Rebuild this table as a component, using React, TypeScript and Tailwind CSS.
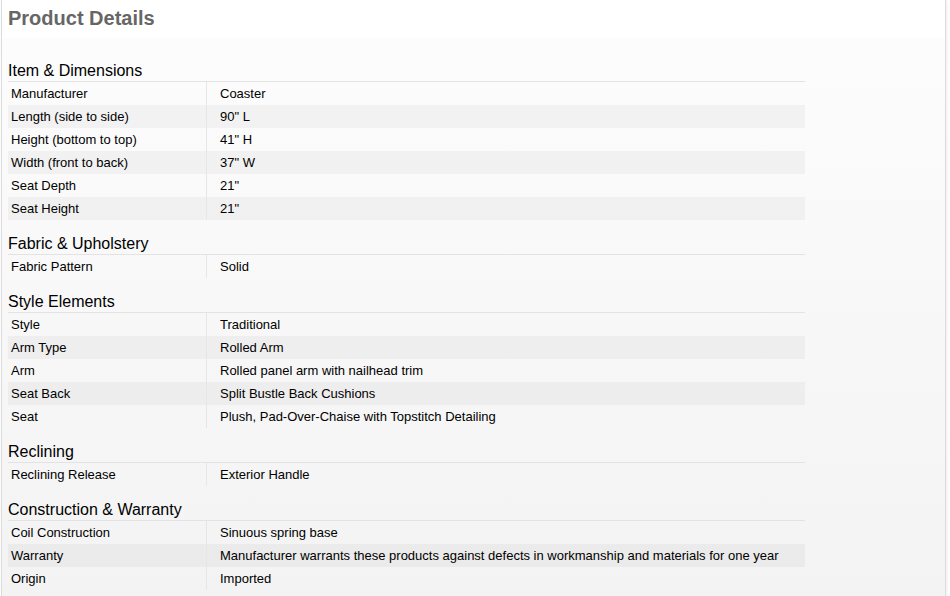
import React from "react"

type Row = [string, string]

const sections: { title: string; rows: Row[] }[] = [
  {
    title: "Item & Dimensions",
    rows: [
      ["Manufacturer", "Coaster"],
      ["Length (side to side)", '90" L'],
      ["Height (bottom to top)", '41" H'],
      ["Width (front to back)", '37" W'],
      ["Seat Depth", '21"'],
      ["Seat Height", '21"'],
    ],
  },
  {
    title: "Fabric & Upholstery",
    rows: [["Fabric Pattern", "Solid"]],
  },
  {
    title: "Style Elements",
    rows: [
      ["Style", "Traditional"],
      ["Arm Type", "Rolled Arm"],
      ["Arm", "Rolled panel arm with nailhead trim"],
      ["Seat Back", "Split Bustle Back Cushions"],
      ["Seat", "Plush, Pad-Over-Chaise with Topstitch Detailing"],
    ],
  },
  {
    title: "Reclining",
    rows: [["Reclining Release", "Exterior Handle"]],
  },
  {
    title: "Construction & Warranty",
    rows: [
      ["Coil Construction", "Sinuous spring base"],
      ["Warranty", "Manufacturer warrants these products against defects in workmanship and materials for one year"],
      ["Origin", "Imported"],
    ],
  },
]

function Section({ title, rows, first }: { title: string; rows: Row[]; first?: boolean }) {
  return (
    <div className={first ? "mt-[22px]" : "mt-[13px]"}>
      <h3 className="h-[22px] w-[797px] border-b border-[#e3e3e3] text-[16px] leading-[21px] text-black">
        {title}
      </h3>
      <div className="w-[797px]">
        {rows.map(([label, value], i) => (
          <div key={label} className={`flex h-[23px] text-[13px] leading-[23px] text-black ${i % 2 === 1 ? "bg-black/[0.035]" : ""}`}>
            <div className="w-[199px] shrink-0 border-r border-[#e6e6e6] pl-[3px]">{label}</div>
            <div className="pl-[13px] whitespace-nowrap">{value}</div>
          </div>
        ))}
      </div>
    </div>
  )
}

export default function App() {
  return (
    <div className="h-[596px] w-[950px] overflow-hidden bg-white" style={{ fontFamily: '"Liberation Sans", Arial, sans-serif' }}>
      <div className="ml-px h-full w-[945px] border-x border-[#dcdcdc] bg-gradient-to-b from-[#fdfdfd] to-[#f3f3f3] shadow-[1px_0_3px_rgba(0,0,0,0.08)]">
        <div className="h-[38px] bg-white pl-[6px]">
          <h2 className="text-[20px] font-bold leading-[36px] text-[#666666]">Product Details</h2>
        </div>
        <div className="pl-[6px]">
          {sections.map((s, i) => (
            <Section key={s.title} title={s.title} rows={s.rows} first={i === 0} />
          ))}
        </div>
      </div>
    </div>
  )
}
